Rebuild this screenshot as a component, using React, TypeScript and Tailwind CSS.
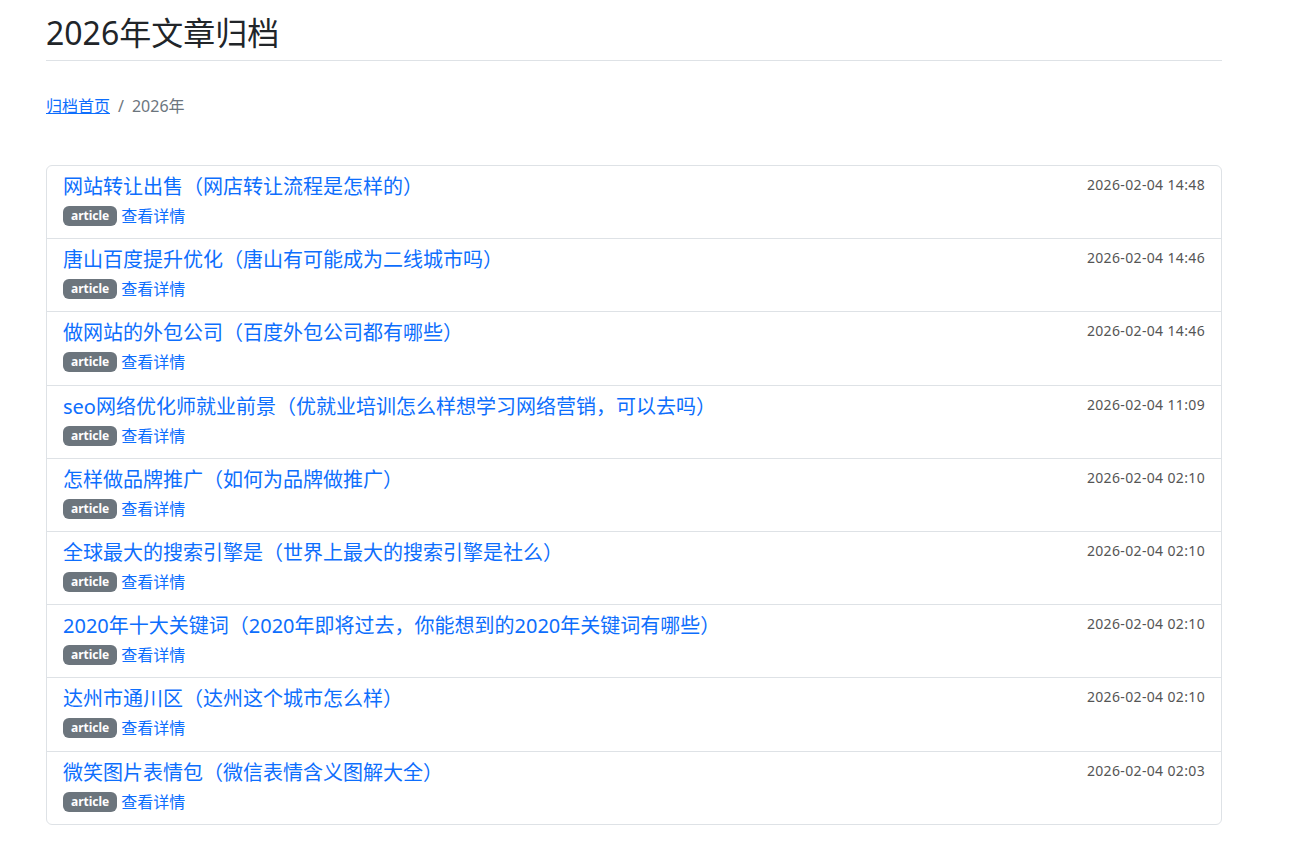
const posts = [
  { title: '网站转让出售（网店转让流程是怎样的）', time: '2026-02-04 14:48' },
  { title: '唐山百度提升优化（唐山有可能成为二线城市吗）', time: '2026-02-04 14:46' },
  { title: '做网站的外包公司（百度外包公司都有哪些）', time: '2026-02-04 14:46' },
  { title: 'seo网络优化师就业前景（优就业培训怎么样想学习网络营销，可以去吗）', time: '2026-02-04 11:09' },
  { title: '怎样做品牌推广（如何为品牌做推广）', time: '2026-02-04 02:10' },
  { title: '全球最大的搜索引擎是（世界上最大的搜索引擎是社么）', time: '2026-02-04 02:10' },
  { title: '2020年十大关键词（2020年即将过去，你能想到的2020年关键词有哪些）', time: '2026-02-04 02:10' },
  { title: '达州市通川区（达州这个城市怎么样）', time: '2026-02-04 02:10' },
  { title: '微笑图片表情包（微信表情含义图解大全）', time: '2026-02-04 02:03' },
];

function PostItem({ title, time }: { title: string; time: string }) {
  return (
    <div className="flex justify-between px-4 py-2 border-b border-[#dee2e6] last:border-b-0">
      <div className="min-w-0">
        <a href="#" className="block text-[20px] leading-[24px] text-[#0d6efd] mt-[1px] mb-[3px]">
          {title}
        </a>
        <div className="flex items-center h-[28.2px]">
          <span className="inline-block bg-[#6c757d] text-white text-[12px] font-bold leading-none px-[8px] py-[4px] rounded-[6px]">
            article
          </span>
          <a href="#" className="ml-[4px] text-[16px] text-[#0d6efd]">
            查看详情
          </a>
        </div>
      </div>
      <small className="text-[14px] leading-[21px] tracking-[0.35px] text-[#555] whitespace-nowrap">{time}</small>
    </div>
  );
}

export default function App() {
  return (
    <div
      className="min-h-screen bg-white text-[#212529]"
      style={{ fontFamily: '"Noto Sans", "Noto Sans CJK SC", sans-serif' }}
    >
      <div className="ml-[46px] w-[1176px]">
        <div className="pt-[14px] pb-[8px] border-b border-[#dee2e6]">
          <h2 className="text-[32px] leading-[38px] font-normal">2026年文章归档</h2>
        </div>
        <nav className="mt-[33px] flex items-center text-[16px] leading-[24px]">
          <a href="#" className="text-[#0d6efd] underline">归档首页</a>
          <span className="px-2 text-[#6c757d]">/</span>
          <span className="text-[#6c757d]">2026年</span>
        </nav>
        <div className="mt-[47px] border border-[#dee2e6] rounded-[6px]">
          {posts.map((p) => (
            <PostItem key={p.title} title={p.title} time={p.time} />
          ))}
        </div>
      </div>
    </div>
  );
}
